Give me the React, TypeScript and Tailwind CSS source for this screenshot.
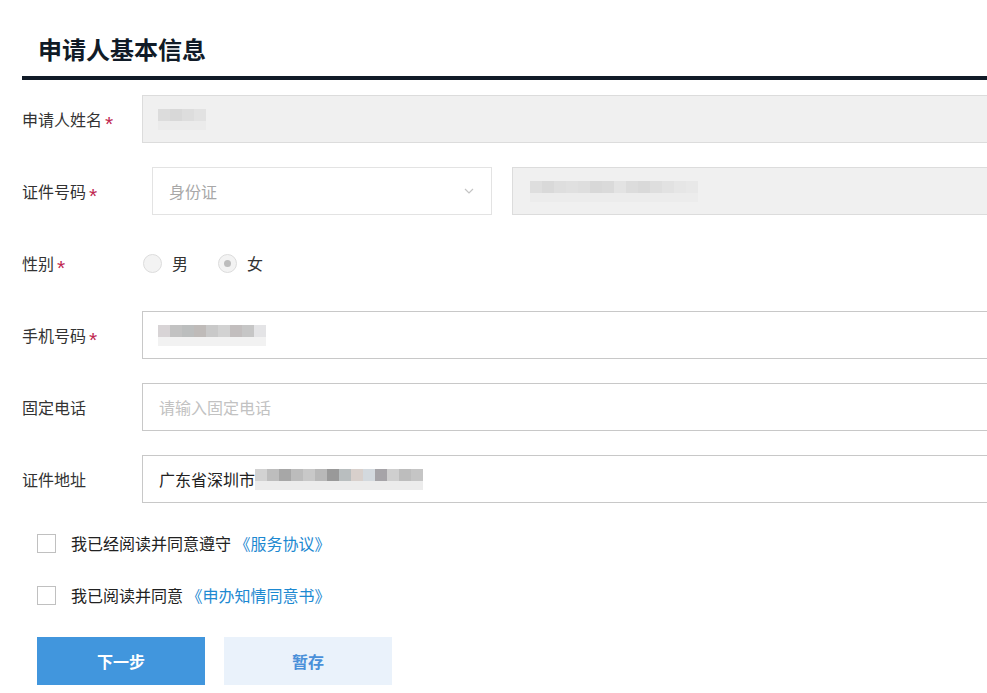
import type { ReactNode } from 'react';

const font = { fontFamily: '"Microsoft YaHei", "Noto Sans CJK SC", "Noto Sans", sans-serif' };

function Label({ text, required }: { text: string; required?: boolean }) {
  return (
    <div className="flex w-[120px] shrink-0 items-center text-[16px] text-[#333]">
      {text}
      {required && (
        <span className="relative top-[4px] ml-[3px] text-[21px] leading-none text-[#c0264f]" style={{ fontFamily: '"Liberation Sans", sans-serif' }}>
          *
        </span>
      )}
    </div>
  );
}

function Blur({ tones, bottom }: { tones: string[]; bottom?: string }) {
  return (
    <div className="flex flex-col blur-[0.6px]">
      <div className="flex">
        {tones.map((c, i) => (
          <span key={i} className="h-[12px] w-[12px]" style={{ background: c }} />
        ))}
      </div>
      <div className="flex">
        {tones.map((_, i) => (
          <span key={i} className="h-[9px] w-[12px]" style={{ background: bottom ?? '#eeeeee' }} />
        ))}
      </div>
    </div>
  );
}

function Row({ children }: { children: ReactNode }) {
  return <div className="flex h-[48px] items-center">{children}</div>;
}

export default function App() {
  return (
    <div className="min-h-[693px] w-full overflow-hidden bg-white" style={font}>
      <div className="w-[1010px] pl-[22px]">
        <div className="border-b-[4px] border-[#111b27] pb-[11px] pl-[16px] pt-[33px]">
          <h1 className="text-[24px] font-bold leading-[32px] text-[#111b27]">申请人基本信息</h1>
        </div>

        <div className="mt-[15px] flex flex-col gap-[24px]">
          <Row>
            <Label text="申请人姓名" required />
            <div className="flex h-full flex-1 items-center border border-[#dcdcdc] bg-[#f0f0f0] pl-[15px]">
              <Blur tones={['#dcdcdc', '#d8d8d8', '#dddddd', '#e2e2e2']} bottom="#ebebeb" />
            </div>
          </Row>

          <Row>
            <Label text="证件号码" required />
            <div className="ml-[10px] flex h-full w-[340px] items-center justify-between border border-[#e3e3e3] bg-white px-[16px]">
              <span className="text-[16px] text-[#a8a8a8]">身份证</span>
              <svg width="12" height="12" viewBox="0 0 12 12" fill="none" stroke="#c4c4c4" strokeWidth="1.2">
                <path d="M2 4l4 4 4-4" />
              </svg>
            </div>
            <div className="ml-[20px] flex h-full flex-1 items-center border border-[#dcdcdc] bg-[#f0f0f0] pl-[17px]">
              <Blur
                tones={['#dedede', '#d9d9d9', '#dedede', '#e0e0e0', '#dedede', '#d8d8d8', '#dadada', '#e3e3e3', '#dcdcdc', '#d9d9d9', '#dedede', '#e2e2e2', '#e6e6e6', '#e8e8e8']}
                bottom="#ececec"
              />
            </div>
          </Row>

          <Row>
            <Label text="性别" required />
            <label className="flex items-center">
              <span className="ml-[1px] h-[19px] w-[19px] rounded-full border border-[#dcdcdc] bg-[#f3f3f3]" />
              <span className="ml-[10px] text-[16px] text-[#333]">男</span>
            </label>
            <label className="ml-[30px] flex items-center">
              <span className="flex h-[19px] w-[19px] items-center justify-center rounded-full border border-[#dcdcdc] bg-[#f3f3f3]">
                <span className="h-[7px] w-[7px] rounded-full bg-[#bdbdbd]" />
              </span>
              <span className="ml-[10px] text-[16px] text-[#333]">女</span>
            </label>
          </Row>

          <Row>
            <Label text="手机号码" required />
            <div className="flex h-full flex-1 items-center border border-[#c8c8c8] bg-white pl-[15px]">
              <Blur
                tones={['#d8d4d6', '#c2c2c2', '#bcbebe', '#bfbbb9', '#c9c9c9', '#d2d2d2', '#c2bebe', '#c6c6c6', '#e4e4e6']}
                bottom="#f2f2f2"
              />
            </div>
          </Row>

          <Row>
            <Label text="固定电话" />
            <div className="flex h-full flex-1 items-center border border-[#c8c8c8] bg-white pl-[16px]">
              <span className="text-[16px] text-[#c2c2c2]">请输入固定电话</span>
            </div>
          </Row>

          <Row>
            <Label text="证件地址" />
            <div className="flex h-full flex-1 items-center border border-[#c8c8c8] bg-white pl-[16px]">
              <span className="text-[16px] text-[#222]">广东省深圳市</span>
              <Blur
                tones={['#d2d2d2', '#bdbdbd', '#a7a7a7', '#bcbcbc', '#c8c8c8', '#b8b8b8', '#999999', '#b9bebf', '#d8d0cc', '#d3d9de', '#a6a4a8', '#cfcfcf', '#bdbdbd', '#c5c5c5']}
                bottom="#ececec"
              />
            </div>
          </Row>
        </div>

        <div className="mt-[28px] flex flex-col gap-[28px] pl-[15px]">
          <label className="flex items-center">
            <span className="h-[19px] w-[19px] border border-[#c0c0c0] bg-white" />
            <span className="ml-[15px] text-[16px] text-[#222]">
              我已经阅读并同意遵守 <span className="text-[#1d89d1]">《服务协议》</span>
            </span>
          </label>
          <label className="flex items-center">
            <span className="h-[19px] w-[19px] border border-[#c0c0c0] bg-white" />
            <span className="ml-[15px] text-[16px] text-[#222]">
              我已阅读并同意 <span className="text-[#1d89d1]">《申办知情同意书》</span>
            </span>
          </label>
        </div>

        <div className="mt-[30px] flex gap-[19px] pl-[15px]">
          <button className="h-[48px] w-[168px] bg-[#4196dd] text-[16px] font-bold text-white">下一步</button>
          <button className="h-[48px] w-[168px] bg-[#eaf2fb] text-[16px] font-bold text-[#4a90d9]">暂存</button>
        </div>
      </div>
    </div>
  );
}
